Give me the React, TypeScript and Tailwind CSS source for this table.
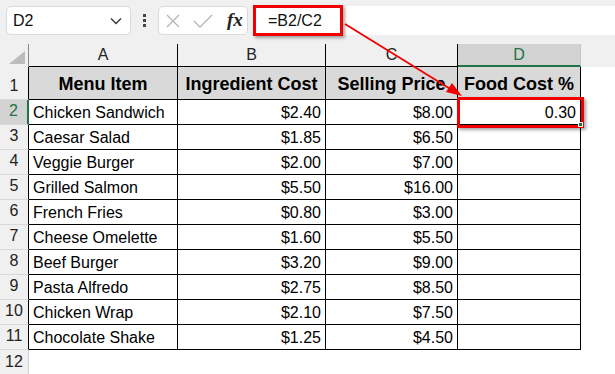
import React from "react";

const rows = [
  ["Chicken Sandwich", "$2.40", "$8.00", "0.30"],
  ["Caesar Salad", "$1.85", "$6.50", ""],
  ["Veggie Burger", "$2.00", "$7.00", ""],
  ["Grilled Salmon", "$5.50", "$16.00", ""],
  ["French Fries", "$0.80", "$3.00", ""],
  ["Cheese Omelette", "$1.60", "$5.50", ""],
  ["Beef Burger", "$3.20", "$9.00", ""],
  ["Pasta Alfredo", "$2.75", "$8.50", ""],
  ["Chicken Wrap", "$2.10", "$7.50", ""],
  ["Chocolate Shake", "$1.25", "$4.50", ""],
];

function Toolbar() {
  return (
    <div className="h-[44px] bg-[#f0f0f0] flex items-start pt-[6px] pl-[6px]">
      <div className="w-[125px] h-[29px] bg-white border border-[#dadada] rounded-[5px] flex items-center justify-between pl-[6px] pr-[8px] text-[16px] text-[#111]">
        <span>D2</span>
        <svg width="12" height="8" viewBox="0 0 12 8">
          <path d="M1 1.5 L6 6.5 L11 1.5" fill="none" stroke="#333" strokeWidth="1.3" />
        </svg>
      </div>
      <div className="w-[27px] h-[29px] flex flex-col items-center justify-center gap-[2px]">
        <div className="w-[3px] h-[3px] bg-[#444]" />
        <div className="w-[3px] h-[3px] bg-[#444]" />
        <div className="w-[3px] h-[3px] bg-[#444]" />
      </div>
      <div className="w-[90px] h-[29px] bg-white border border-[#dadada] rounded-[5px] flex items-center pl-[7px] gap-[13px]">
        <svg width="14" height="14" viewBox="0 0 14 14">
          <path d="M1 1 L13 13 M13 1 L1 13" stroke="#b4b4b4" strokeWidth="1.3" />
        </svg>
        <svg width="20" height="14" viewBox="0 0 20 14">
          <path d="M1 7 L7 13 L19 1" fill="none" stroke="#b4b4b4" strokeWidth="1.3" />
        </svg>
        <span className="font-['Liberation_Serif',serif] italic font-bold text-[19px] leading-none text-[#222] ml-[1px] -mt-[2px]">
          fx
        </span>
      </div>
      <div className="flex-1 h-[29px] bg-white ml-[5px] flex items-center pl-[15px] text-[16px] text-[#111]">
        =B2/C2
      </div>
    </div>
  );
}

function ColumnHeaders() {
  return (
    <div className="h-[23px] flex bg-[#f0f0f0] text-[16px] text-[#222]">
      <div className="w-[29px] shrink-0 border-r border-[#8a8a8a] flex items-end justify-end pr-[3px] pb-[3px]">
        <svg width="16" height="13" viewBox="0 0 16 13">
          <polygon points="16,0 16,13 0,13" fill="#bdbdbd" />
        </svg>
      </div>
      <div className="w-[149px] shrink-0 border-r border-[#d4d4d4] border-b border-black flex items-center justify-center">A</div>
      <div className="w-[148px] shrink-0 border-r border-[#d4d4d4] border-b border-black flex items-center justify-center">B</div>
      <div className="w-[132px] shrink-0 border-r border-[#d4d4d4] border-b border-black flex items-center justify-center">C</div>
      <div className="w-[123px] shrink-0 bg-[#d2d2d2] border-r border-[#c4c4c4] border-b-2 border-b-[#217346] flex items-center justify-center text-[#217346]">D</div>
      <div className="flex-1" />
    </div>
  );
}

function RowHead({ n, active }: { n: number; active?: boolean }) {
  return (
    <div
      className={
        "w-[29px] shrink-0 flex items-end justify-center pb-[1px] text-[16px] border-b border-b-[#d8d8d8] " +
        (active
          ? "bg-[#d2d2d2] text-[#217346] border-r-2 border-r-[#217346]"
          : "bg-[#f0f0f0] text-[#222] border-r border-r-black")
      }
    >
      {n}
    </div>
  );
}

export default function App() {
  return (
    <div className="w-[615px] h-[374px] bg-white overflow-hidden relative font-['Liberation_Sans',Arial,sans-serif]">
      <Toolbar />
      <ColumnHeaders />
      <div className="h-[33px] flex">
        <RowHead n={1} />
        {["Menu Item", "Ingredient Cost", "Selling Price", "Food Cost %"].map((h, i) => (
          <div
            key={h}
            className={
              "shrink-0 bg-[#d9d9d9] border-r border-b border-black flex items-center justify-center pt-[2px] font-bold text-[18px] text-black " +
              ["w-[149px]", "w-[148px]", "w-[132px]", "w-[123px]"][i]
            }
          >
            {h}
          </div>
        ))}
      </div>
      {rows.map((r, idx) => (
        <div key={r[0]} className="h-[25px] flex text-[16px] text-black">
          <RowHead n={idx + 2} active={idx === 0} />
          <div className="w-[149px] shrink-0 border-r border-b border-black flex items-center pl-[4px] pt-[1px]">{r[0]}</div>
          <div className="w-[148px] shrink-0 border-r border-b border-black flex items-center justify-end pr-[4px] pt-[1px]">{r[1]}</div>
          <div className="w-[132px] shrink-0 border-r border-b border-black flex items-center justify-end pr-[4px] pt-[1px]">{r[2]}</div>
          <div className="w-[123px] shrink-0 border-r border-b border-black flex items-center justify-end pr-[4px] pt-[1px]">{r[3]}</div>
        </div>
      ))}
      <div className="h-[25px] flex">
        <div className="w-[29px] shrink-0 flex items-end justify-center pb-[1px] text-[16px] bg-[#f0f0f0] text-[#222] border-r border-[#d0d0d0]">12</div>
      </div>

      {/* annotation boxes */}
      <div className="absolute left-[253px] top-[5px] w-[90px] h-[31px] border-[3px] border-[#f00000] shadow-[2px_2px_3px_rgba(0,0,0,0.35)]" />
      <div className="absolute left-[457px] top-[97px] w-[127px] h-[31px] border-[3px] border-[#f00000] shadow-[2px_2px_3px_rgba(0,0,0,0.35)]" />
      <div className="absolute left-[578px] top-[122px] w-[5px] h-[5px] bg-[#217346] border border-white" />
      <svg className="absolute left-0 top-0" width="615" height="374" viewBox="0 0 615 374">
        <line x1="345" y1="24" x2="452" y2="90" stroke="#f00000" strokeWidth="1.8" />
        <polygon points="462,96 446,92 452,83" fill="#f00000" />
      </svg>
    </div>
  );
}
